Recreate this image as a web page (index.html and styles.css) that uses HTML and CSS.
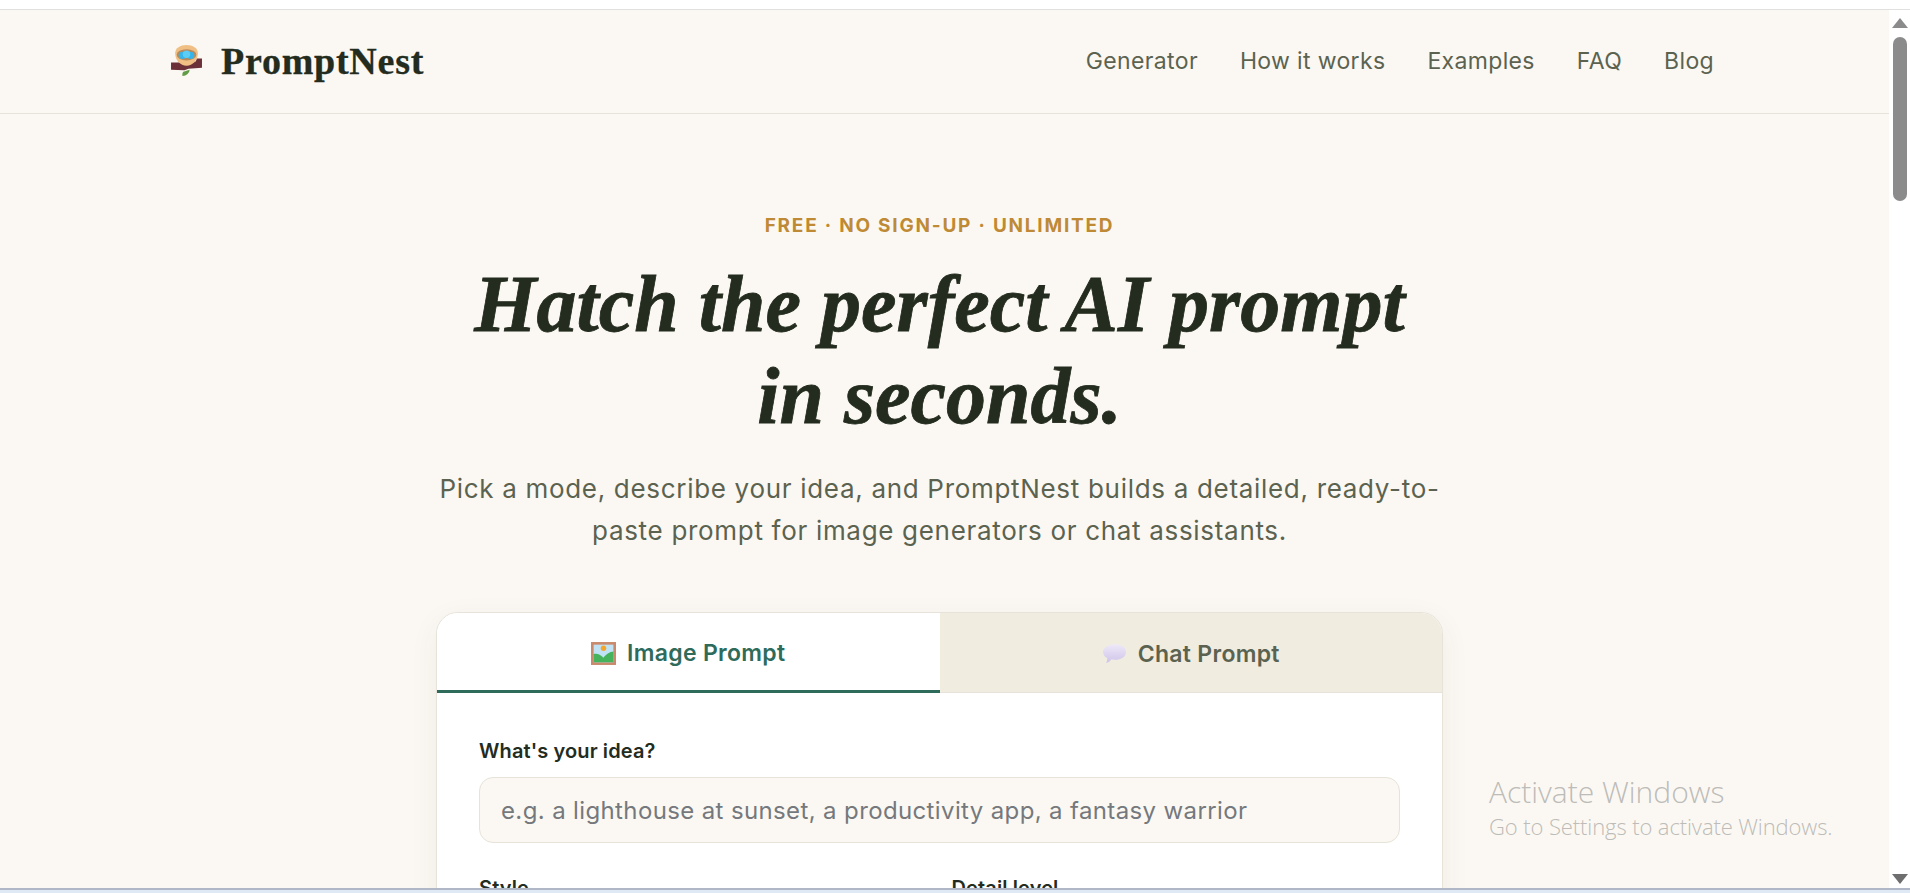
FILE: index.html
```html
<!DOCTYPE html>
<html lang="en">

<head>
  <meta charset="UTF-8">
  <meta name="viewport" content="width=device-width, initial-scale=1.0">
  <title>PromptNest</title>
  <link rel="stylesheet" href="styles.css">
</head>

<body>
  <div class="top-strip"></div>
  <div class="window">
    <div class="page">
      <header class="site-header">
        <a class="logo" href="#">
          <svg class="logo-icon" viewBox="0 0 32 32" aria-hidden="true">
            <path d="M1 18h6l18-1 1-3h5v9l-13 1-4 1.500L1 25z" fill="#6b3038" />
            <path d="M13 27l6-2c0 3-3 6-7 6 0-2 0-3 1-4z" fill="#5f9c45" />
            <path d="M5 9c0-5 5-8 11-8s11 3 11 8c0 7-5 12-11 12S5 16 5 9z" fill="#f0bf84" />
            <ellipse cx="16" cy="10.500" rx="9.500" ry="5.500" fill="#b98a5c" />
            <circle cx="12" cy="11" r="3.600" fill="#35b5ea" />
            <circle cx="20" cy="11" r="3.600" fill="#35b5ea" />
            <circle cx="16" cy="10" r="3.600" fill="#5ccdf5" />
          </svg>
          <span>PromptNest</span>
        </a>
        <nav class="site-nav">
          <a href="#">Generator</a>
          <a href="#">How it works</a>
          <a href="#">Examples</a>
          <a href="#">FAQ</a>
          <a href="#">Blog</a>
        </nav>
      </header>

      <main class="content">
        <section class="hero">
          <p class="eyebrow">FREE · NO SIGN-UP · UNLIMITED</p>
          <h1>Hatch the perfect AI prompt<br>in seconds.</h1>
          <p class="lead">Pick a mode, describe your idea, and PromptNest builds a detailed, ready-to-paste prompt for image generators or chat assistants.</p>
        </section>

        <section class="card">
          <div class="tabs">
            <button class="tab active">
              <svg class="tab-icon" viewBox="0 0 24 24" aria-hidden="true">
                <rect x="0" y="1" width="24" height="22" fill="#c9896a" />
                <rect x="2.500" y="3.500" width="19" height="17" fill="#bfe3f5" />
                <circle cx="12" cy="7" r="2.600" fill="#f4a62a" />
                <path d="M2.500 20.500v-8c4-1 7 1 9.500 3.500 2-3 6-6 9.500-6v10.500z" fill="#45b35c" />
              </svg>
              Image Prompt
            </button>
            <button class="tab">
              <svg class="tab-icon" viewBox="0 0 24 24" aria-hidden="true">
                <defs>
                  <linearGradient id="bubble" x1="0" y1="0" x2="0" y2="1">
                    <stop offset="0" stop-color="#eee9f8" />
                    <stop offset="1" stop-color="#cfc4ea" />
                  </linearGradient>
                </defs>
                <path d="M12.500 3C18.500 3 23 6 23 10.500S18.500 18 12.500 18c-1.200 0-2.300-.1-3.300-.4C8 19.500 6 20.800 4 21c.8-1.300 1.100-2.800.9-4.600C2.400 15 1 13 1 10.500 1 6 6.500 3 12.500 3z" fill="url(#bubble)" />
              </svg>
              Chat Prompt
            </button>
          </div>
          <form class="card-body">
            <label class="field-label" for="idea">What's your idea?</label>
            <input class="field-input" id="idea" type="text" placeholder="e.g. a lighthouse at sunset, a productivity app, a fantasy warrior">
            <div class="field-row">
              <label class="field-label">Style</label>
              <label class="field-label">Detail level</label>
            </div>
          </form>
        </section>
      </main>

      <div class="activate">
        <p class="activate-title">Activate Windows</p>
        <p class="activate-text">Go to Settings to activate Windows.</p>
      </div>
    </div>

    <div class="scrollbar">
      <span class="arrow-up"></span>
      <span class="thumb"></span>
      <span class="arrow-down"></span>
    </div>
  </div>
  <div class="bottom-strip"></div>
</body>

</html>
```

FILE: styles.css
```css
* {
  box-sizing: border-box;
}

html,
body {
  height: 100%;
  margin: 0;
  overflow: hidden;
}

body {
  font-family: 'Inter', 'Liberation Sans', sans-serif;
  background-color: #ffffff;
  color: #232c1e;
  display: flex;
  flex-direction: column;
}

.top-strip {
  height: 10px;
  flex: none;
  background-color: #ffffff;
  border-bottom: 1px solid #e0e0de;
}

.window {
  flex: 1;
  min-height: 0;
  display: flex;
}

.page {
  flex: 1;
  min-width: 0;
  position: relative;
  overflow: hidden;
  background-color: #fbf8f3;
}

.site-header {
  height: 104px;
  padding: 0 175px 2px 170px;
  display: flex;
  align-items: center;
  justify-content: space-between;
  border-bottom: 1px solid #e7e3da;
}

.logo {
  display: flex;
  align-items: center;
  gap: 18px;
  color: #232c1e;
  text-decoration: none;
  font-family: 'Liberation Serif', serif;
  font-size: 38px;
  font-weight: 700;
  letter-spacing: 0.750px;
  -webkit-text-stroke: 0.300px #232c1e;
}

.logo-icon {
  width: 33px;
  height: 33px;
}

.site-nav {
  display: flex;
  gap: 42px;
}

.site-nav a {
  color: #5b6350;
  text-decoration: none;
  font-size: 23px;
  letter-spacing: 0.350px;
}

.content {
  padding-right: 10px;
}

.hero {
  padding-top: 100px;
  text-align: center;
}

.eyebrow {
  margin: 0;
  color: #bf8a35;
  font-size: 19px;
  font-weight: 700;
  line-height: 24px;
  letter-spacing: 1.780px;
}

h1 {
  margin: 20px 0 0;
  font-family: 'Liberation Serif', serif;
  font-size: 80px;
  font-style: italic;
  font-weight: 700;
  line-height: 92px;
  color: #232c1e;
  -webkit-text-stroke: 0.800px #232c1e;
}

.lead {
  width: 1010px;
  margin: 26px auto 0;
  color: #5b6350;
  font-size: 26px;
  line-height: 42px;
  letter-spacing: 0.690px;
}

.card {
  width: 1007px;
  margin: 60px auto 0;
  background-color: #ffffff;
  border: 1px solid #e7e3da;
  border-radius: 22px;
  box-shadow: 0 8px 30px rgba(60, 50, 20, 0.06);
  overflow: hidden;
}

.tabs {
  display: flex;
}

.tab {
  flex: 1;
  height: 80px;
  padding-top: 3px;
  display: flex;
  align-items: center;
  justify-content: center;
  gap: 11px;
  border: none;
  border-bottom: 1px solid #e7e3da;
  background-color: #f0ece0;
  color: #5b6350;
  font-family: inherit;
  font-size: 23px;
  font-weight: 600;
  letter-spacing: 0.300px;
}

.tab.active {
  padding-top: 4px;
  background-color: #ffffff;
  color: #2f6b5b;
  border-bottom: 3px solid #2f6b5b;
}

.tab-icon {
  width: 25px;
  height: 25px;
}

.card-body {
  padding: 46px 42px 42px;
}

.field-label {
  display: block;
  color: #232c1e;
  font-size: 20px;
  font-weight: 600;
  line-height: 24px;
  letter-spacing: 0.120px;
}

.field-input {
  display: block;
  width: 100%;
  height: 66px;
  margin-top: 14px;
  padding: 0 21px;
  background-color: #fbf8f3;
  border: 1px solid #e7e3da;
  border-radius: 14px;
  font-family: inherit;
  font-size: 24px;
  letter-spacing: 0.370px;
}

.field-input::placeholder {
  color: #75787c;
  opacity: 1;
}

.field-row {
  display: grid;
  grid-template-columns: 1fr 1fr;
  gap: 24px;
  margin-top: 33px;
}

.activate {
  position: absolute;
  left: 1489px;
  top: 763px;
  color: #bdbcb8;
  font-family: 'Open Sans', sans-serif;
}

.activate p {
  margin: 0;
}

.activate-title {
  font-size: 30px;
  font-weight: 300;
  line-height: 38px;
}

.activate-text {
  font-size: 22px;
  font-weight: 300;
  line-height: 31px;
  letter-spacing: -0.100px;
}

.scrollbar {
  width: 21px;
  flex: none;
  display: flex;
  flex-direction: column;
  align-items: center;
  background-color: #ffffff;
}

.arrow-up,
.arrow-down {
  width: 0;
  height: 0;
  border-left: 8px solid transparent;
  border-right: 8px solid transparent;
}

.arrow-up {
  margin-top: 8px;
  border-bottom: 10px solid #8b8b8b;
}

.arrow-down {
  margin-top: auto;
  margin-bottom: 4px;
  border-top: 10px solid #6e6e6e;
}

.thumb {
  width: 14px;
  height: 164px;
  margin-top: 9px;
  border-radius: 7px;
  background-color: #8b8b8b;
}

.bottom-strip {
  height: 5px;
  flex: none;
  background-color: #dfe8f5;
  border-top: 2px solid #b0b8c8;
}
```
